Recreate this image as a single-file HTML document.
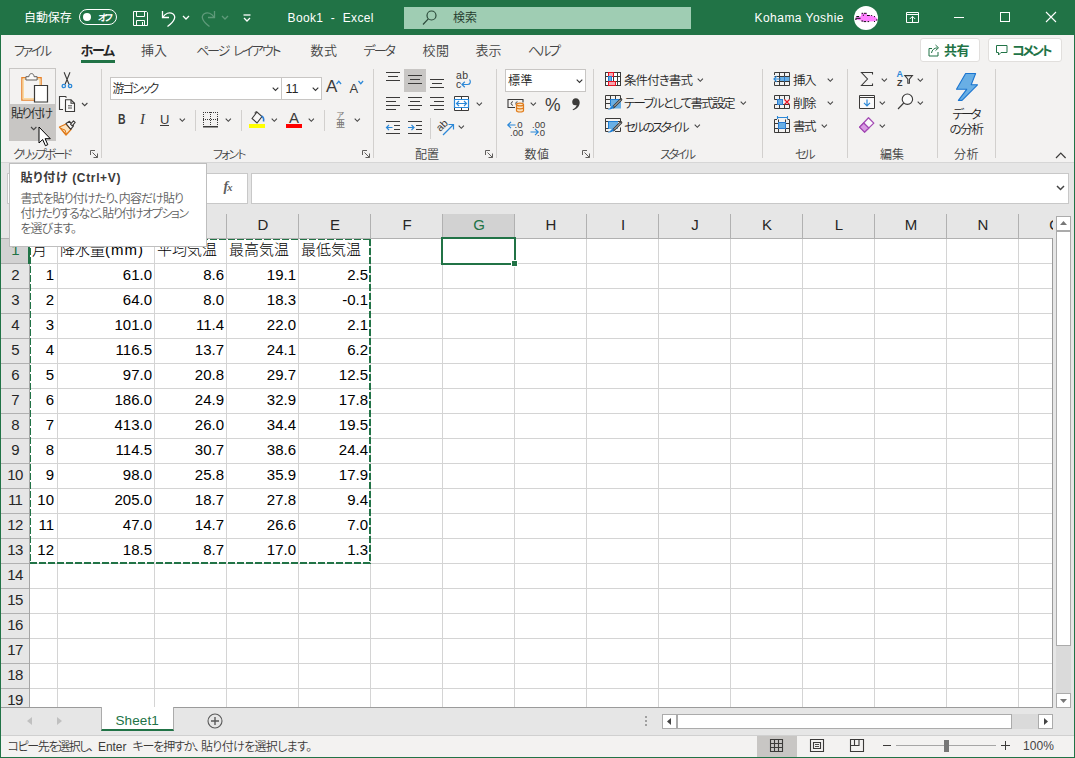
<!DOCTYPE html>
<html lang="ja"><head><meta charset="utf-8"><title>Book1 - Excel</title>
<style>
*{box-sizing:border-box;margin:0;padding:0}
html,body{width:1075px;height:758px;overflow:hidden;background:#e6e6e6}
body{font-family:"Liberation Sans","Noto Sans CJK JP",sans-serif;font-size:12px;color:#262626;position:relative}
.a{position:absolute}
.t{position:absolute;white-space:nowrap;line-height:1;font-feature-settings:"palt";font-weight:350}
svg{position:absolute;overflow:visible}
#title{left:0;top:0;width:1075px;height:35px;background:#217346}
#title .t{color:#fff}
#ribbon{left:1px;top:35px;width:1073px;height:127px;background:#f3f2f1}
.tab{font-size:13px;color:#444;top:44px;letter-spacing:-0.6px}
.gl{font-size:12px;color:#444;top:147px;letter-spacing:-0.8px}
.sep{position:absolute;top:69px;width:1px;height:89px;background:#d2d0ce}
.rt{font-size:12.5px;color:#262626;letter-spacing:-0.7px}
.ch{position:absolute;top:213px;height:23px;font-size:15px;color:#262626;text-align:center;line-height:23px}
.rh{position:absolute;left:1px;width:28px;height:24px;font-size:15px;letter-spacing:-0.7px;color:#262626;text-align:center;line-height:22px}
.c{position:absolute;height:24px;font-size:15px;line-height:22px;color:#000;font-weight:300;white-space:nowrap;overflow:hidden}
.r{text-align:right;padding-right:3px}
.l{text-align:left;padding-left:2px}
</style></head><body>

<div id="title" class="a"></div>
<div id="ribbon" class="a"></div>
<div class="a" style="left:1px;top:162px;width:1073px;height:1px;background:#d6d6d6"></div>
<div class="a" style="left:0;top:0;width:1px;height:758px;background:#217346"></div>
<div class="a" style="left:1074px;top:0;width:1px;height:758px;background:#217346"></div>
<div class="a" style="left:0;top:757px;width:1075px;height:1px;background:#217346"></div>
<div class="t" style="left:24px;top:12px;font-size:12px;color:#fff;letter-spacing:-0.1px;font-weight:400">自動保存</div>
<div class="a" style="left:79px;top:9px;width:38px;height:16px;border:1px solid #fff;border-radius:8px"></div>
<div class="a" style="left:83px;top:13px;width:8px;height:8px;border-radius:4px;background:#fff"></div>
<div class="t" style="left:98px;top:13px;font-size:9.500px;color:#fff;letter-spacing:-2.6px;font-weight:700;transform:skewX(-6deg)">オフ</div>
<svg style="left:132px;top:10px" width="17" height="17" viewBox="0 0 17 17" fill="none" stroke="#fff" stroke-width="1"><path d="M1.5 1.5h13l1 1v13h-14z"/><path d="M4.5 1.5v5h8v-5"/><path d="M4.500 15.500v-5h8v5"/><path d="M10.500 12v3.500"/></svg>
<svg style="left:160px;top:9px" width="18" height="18" viewBox="0 0 18 18" fill="none" stroke="#fff" stroke-width="1.300"><path d="M2.500 2v6.500h6.500"/><path d="M2.800 8.300C5 4.500 9.500 2.500 12.800 4.800c3.600 2.600 2.200 7-5.300 12.700"/></svg>
<svg style="left:182px;top:15px" width="8" height="6" viewBox="0 0 8 6" fill="none" stroke="#fff" stroke-width="1.300"><path d="M1 1l3 3 3-3"/></svg>
<svg style="left:199px;top:9px" width="18" height="18" viewBox="0 0 18 18" fill="none" stroke="#5f9a7a" stroke-width="1.300"><path d="M15.500 2v6.500h-6.500"/><path d="M15.200 8.300C13 4.500 8.500 2.500 5.200 4.800c-3.600 2.600-2.200 7 5.300 12.700"/></svg>
<svg style="left:221px;top:15px" width="8" height="6" viewBox="0 0 8 6" fill="none" stroke="#5f9a7a" stroke-width="1.300"><path d="M1 1l3 3 3-3"/></svg>
<svg style="left:243px;top:14px" width="8" height="8" viewBox="0 0 8 8" fill="none" stroke="#fff" stroke-width="1.300"><path d="M0.500 1h7"/><path d="M1 4l3 3 3-3"/></svg>
<div class="t" style="left:287.500px;top:11.500px;font-size:12px;letter-spacing:0.38px;color:#fff;font-weight:400">Book1&nbsp; -&nbsp; Excel</div>
<div class="a" style="left:404px;top:7px;width:287px;height:22px;background:#9fcdb3"></div>
<svg style="left:421px;top:9px" width="18" height="18" viewBox="0 0 18 18" fill="none" stroke="#2b4a3a" stroke-width="1.200"><circle cx="10.500" cy="6.500" r="4.500"/><path d="M7.300 9.800L2 15.500"/></svg>
<div class="t" style="left:453px;top:12px;font-size:12px;color:#1f3a2c">検索</div>
<div class="t" style="left:754.500px;top:12.400px;font-size:12px;letter-spacing:0.47px;color:#fff;font-weight:400">Kohama Yoshie</div>
<div class="a" style="left:854px;top:6px;width:24px;height:24px;border-radius:12px;background:#fff"></div>
<svg style="left:854px;top:6px" width="24" height="24" viewBox="0 0 24 24" fill="none"><path d="M2.300 10.300h4.700l0.400-3h5.500l0.400 1.700 4.600 0.400 3.400 1.300 2.500 2.500-2.500 2.100-12.700 0.500-1.600-1.300-5.500-0.900z" fill="#ff80ff"/><path d="M7.600 7.300h1.500M10 7.300h2.600M8.800 9.200h1.200M13 9.500h2.800M17.200 9.500h0.900M20 10.600h1M2.400 10.500h2.600M1.400 12.300h5.200M1.300 13.500h1.200M7.400 15h1.800M9.800 15.600h2.300M13.600 15.600h1.500M20 15.500h1M22 14h1.500" stroke="#111" stroke-width="1"/></svg>
<svg style="left:906px;top:12px" width="14" height="11" viewBox="0 0 14 11" fill="none" stroke="#fff" stroke-width="1"><path d="M0.500 0.500h12v10h-12z"/><path d="M0.500 2.500h12"/><path d="M6.500 10v-5.500M3.800 7l2.700-2.700 2.700 2.700"/></svg>
<div class="a" style="left:954px;top:17px;width:10px;height:1px;background:#fff"></div>
<div class="a" style="left:1000px;top:12px;width:10px;height:10px;border:1px solid #fff"></div>
<svg style="left:1046px;top:12px" width="10" height="10" viewBox="0 0 10 10" fill="none" stroke="#fff" stroke-width="1.100"><path d="M0 0l10 10M10 0l-10 10"/></svg>

<div class="t" style="left:14px;top:43.5px;font-size:13px;letter-spacing:-2.34px;color:#444">ファイル</div>
<div class="t" style="left:80.500px;top:43.5px;font-size:13px;letter-spacing:-1.30px;color:#262626;font-weight:bold">ホーム</div>
<div class="a" style="left:81px;top:60px;width:34px;height:3px;background:#217346"></div>
<div class="t" style="left:141px;top:43.5px;font-size:13px;letter-spacing:-0.02px;color:#444">挿入</div>
<div class="t" style="left:196px;top:43.5px;font-size:13px;letter-spacing:-2.04px;color:#444;word-spacing:3px">ページ レイアウト</div>
<div class="t" style="left:310.500px;top:43.5px;font-size:13px;letter-spacing:0.48px;color:#444">数式</div>
<div class="t" style="left:363.500px;top:43.5px;font-size:13px;letter-spacing:-1.92px;color:#444">データ</div>
<div class="t" style="left:422.500px;top:43.5px;font-size:13px;letter-spacing:0.48px;color:#444">校閲</div>
<div class="t" style="left:475.500px;top:43.5px;font-size:13px;letter-spacing:-0.02px;color:#444">表示</div>
<div class="t" style="left:528px;top:43.5px;font-size:13px;letter-spacing:-2.16px;color:#444">ヘルプ</div>
<div class="a" style="left:920px;top:38px;width:60px;height:24px;background:#fff;border:1px solid #e1dfdd;border-radius:3px"></div>
<svg style="left:927.500px;top:44px" width="13" height="13" viewBox="0 0 13 13" fill="none" stroke="#217346" stroke-width="1"><path d="M4 4.500h-3v7.500h9v-4"/><path d="M3.500 9c0.500-3 2.500-5 6-5.200"/><path d="M7.500 1l3 2.800-3 2.800"/></svg>
<div class="t" style="left:944px;top:44.200px;font-size:13px;letter-spacing:-0.52px;color:#217346;font-weight:bold">共有</div>
<div class="a" style="left:988px;top:38px;width:74px;height:24px;background:#fff;border:1px solid #e1dfdd;border-radius:3px"></div>
<svg style="left:996px;top:45px" width="12" height="12" viewBox="0 0 12 12" fill="none" stroke="#217346" stroke-width="1"><path d="M0.500 0.500h10.500v7h-6l-2.500 2.500v-2.500h-2z"/></svg>
<div class="t" style="left:1012px;top:44.200px;font-size:13px;letter-spacing:-2.20px;color:#217346;font-weight:bold">コメント</div>

<!-- clipboard group -->
<div class="a" style="left:9px;top:68px;width:47px;height:73px;border:1px solid #c8c6c4;background:#f3f2f1"></div>
<div class="a" style="left:9px;top:104px;width:47px;height:37px;background:#c8c6c4"></div>
<svg style="left:20px;top:72px" width="30" height="32" viewBox="0 0 30 32" fill="none">
<path d="M1.900 5.700h19.200v22.400h-19.200z" fill="#f5f4f3" stroke="#e8822b" stroke-width="1.400"/>
<path d="M3.300 7.100h16.400v19.600h-16.400z" stroke="#fbd9a0" stroke-width="1.400"/>
<path d="M5.900 8v-3.300h3c0.200-2 1.200-3.100 2.600-3.100s2.400 1.100 2.600 3.100h3v3.300z" fill="#fafafa" stroke="#605e5c" stroke-width="1"/>
<path d="M14.500 13.500h13v16.500h-13z" fill="#fff" stroke="#3b3a39" stroke-width="1.200"/>
</svg>
<div class="t" style="left:11px;top:108px;font-size:12.500px;letter-spacing:-1.87px;color:#262626">貼り付け</div>
<svg style="left:30px;top:126px" width="8" height="5" viewBox="0 0 8 5" fill="none" stroke="#444" stroke-width="1.100"><path d="M1 1l2.700 2.700 2.700-2.700"/></svg>
<!-- scissors -->
<svg style="left:61px;top:71px" width="12" height="18" viewBox="0 0 12 18" fill="none"><path d="M3.100 1.300l4.900 12M9 1.300l-4.900 12" stroke="#3b3a39" stroke-width="1.100"/><circle cx="2.800" cy="15" r="1.700" stroke="#2b88d8" stroke-width="1.300"/><circle cx="9.100" cy="15" r="1.700" stroke="#2b88d8" stroke-width="1.300"/></svg>
<!-- copy -->
<svg style="left:59px;top:96px" width="17" height="17" viewBox="0 0 17 17" fill="none" stroke="#3b3a39" stroke-width="1.100"><path d="M4 13.500h-3.500v-13h6l1 1" fill="#fafafa"/><path d="M6.500 3.800h5.500l3.500 3.500v8.200h-9z" fill="#fafafa"/><path d="M12 3.800v3.500h3.500"/><path d="M9 9.800h4M9 12h4" stroke-width="0.900"/></svg>
<svg style="left:81px;top:102px" width="8" height="5" viewBox="0 0 8 5" fill="none" stroke="#444" stroke-width="1.100"><path d="M1 1l2.700 2.700 2.700-2.700"/></svg>
<!-- format painter -->
<svg style="left:59px;top:120px" width="17" height="16" viewBox="0 0 17 16" fill="none"><path d="M0.500 7l6.500-3 5 5.500-5 5.500z" fill="#fbe3c0" stroke="#e07b1a" stroke-width="1.300" stroke-linejoin="round"/><path d="M4 11.500l3.500 3M2 8.500l4 1.500 1.500 4.500" stroke="#e07b1a" stroke-width="1"/><path d="M7 3.500l3.500-2.200 4 4.500-2.800 3.500z" fill="#fafafa" stroke="#3b3a39" stroke-width="1.100" stroke-linejoin="round"/><path d="M11.500 4.200l3-3.400 1.700 1.600-3 3.400z" fill="#fafafa" stroke="#3b3a39" stroke-width="1.100" stroke-linejoin="round"/></svg>
<div class="t" style="left:13px;top:148.600px;font-size:12px;letter-spacing:-2.42px;color:#444">クリップボード</div>
<svg style="left:90px;top:150px" width="8" height="8" viewBox="0 0 8 8" fill="none" stroke="#605e5c" stroke-width="1"><path d="M0.500 5v-4.500h4.500"/><path d="M2.500 2.500l5 5M7.500 3.500v4h-4"/></svg>
<div class="sep" style="left:101px"></div>
<!-- cursor placeholder is at the end of file -->
<!-- font group -->
<div class="a" style="left:110px;top:77px;width:172px;height:23px;background:#fff;border:1px solid #c8c6c4"></div>
<div class="a" style="left:282px;top:77px;width:40px;height:23px;background:#fff;border:1px solid #c8c6c4;border-left:none"></div>
<div class="a" style="left:281px;top:77px;width:1px;height:23px;background:#c8c6c4"></div>
<div class="t" style="left:112.500px;top:82.500px;font-size:12px;letter-spacing:-1.89px;color:#262626">游ゴシック</div>
<svg style="left:272px;top:87px" width="8" height="5" viewBox="0 0 8 5" fill="none" stroke="#333" stroke-width="1.100"><path d="M0.700 0.700l2.800 2.800 2.800-2.800"/></svg>
<div class="t" style="left:285.500px;top:83px;font-size:12.500px;letter-spacing:0.02px;color:#262626">11</div>
<svg style="left:312px;top:87px" width="8" height="5" viewBox="0 0 8 5" fill="none" stroke="#333" stroke-width="1.100"><path d="M0.700 0.700l2.800 2.800 2.800-2.800"/></svg>
<div class="t" style="left:326px;top:78px;font-size:17px;color:#3b3a39">A</div>
<svg style="left:336px;top:80px" width="6" height="5" viewBox="0 0 6 5" fill="none" stroke="#2b88d8" stroke-width="1.200"><path d="M0.500 4l2.300-2.700 2.300 2.700"/></svg>
<div class="t" style="left:349.500px;top:82px;font-size:13px;color:#3b3a39">A</div>
<svg style="left:358px;top:80px" width="6" height="5" viewBox="0 0 6 5" fill="none" stroke="#2b88d8" stroke-width="1.200"><path d="M0.500 1l2.300 2.700 2.300-2.700"/></svg>
<div class="t" style="left:117.500px;top:112.300px;font-size:14.200px;font-weight:bold;color:#3b3a39;transform:scaleX(0.740);transform-origin:0 0">B</div>
<div class="t" style="left:140px;top:112.300px;font-size:14.800px;font-style:italic;font-weight:400;color:#3b3a39;font-family:'Liberation Serif',serif">I</div>
<div class="t" style="left:160px;top:112.500px;font-size:13px;color:#3b3a39">U</div>
<div class="a" style="left:160px;top:125px;width:9px;height:1px;background:#3b3a39"></div>
<svg style="left:179px;top:118px" width="8" height="5" viewBox="0 0 8 5" fill="none" stroke="#444" stroke-width="1.100"><path d="M0.700 0.700l2.600 2.600 2.600-2.600"/></svg>
<div class="a" style="left:195px;top:110px;width:1px;height:21px;background:#d2d0ce"></div>
<svg style="left:203px;top:112px" width="16" height="16" viewBox="0 0 16 16" fill="none" stroke="#3b3a39" stroke-width="1"><path d="M0 0.500h15M0 7.500h15" stroke-dasharray="1 1"/><path d="M0.500 0v14M7.500 0v14M14.500 0v14" stroke-dasharray="1 1"/><path d="M0 14.750h15" stroke-width="1.500"/></svg>
<svg style="left:225px;top:118px" width="8" height="5" viewBox="0 0 8 5" fill="none" stroke="#444" stroke-width="1.100"><path d="M0.700 0.700l2.600 2.600 2.600-2.600"/></svg>
<div class="a" style="left:241px;top:110px;width:1px;height:21px;background:#d2d0ce"></div>
<svg style="left:249px;top:111px" width="17" height="18" viewBox="0 0 17 18" fill="none"><path d="M3 7.500l5-6.500 5 4.500-5 6.500z" stroke="#3b3a39" stroke-width="1.100" fill="#f7f6f5"/><path d="M8 1c-1.500-1-2.500 0.500-1.500 2" stroke="#3b3a39" stroke-width="1"/><path d="M12.500 5c2 1 2.500 3 2 5.500" stroke="#2b7cd3" stroke-width="1.600"/><rect x="0" y="13" width="16" height="4" fill="#ffff00"/></svg>
<svg style="left:271px;top:118px" width="8" height="5" viewBox="0 0 8 5" fill="none" stroke="#444" stroke-width="1.100"><path d="M0.700 0.700l2.600 2.600 2.600-2.600"/></svg>
<div class="t" style="left:289px;top:109.500px;font-size:15px;color:#3b3a39">A</div>
<div class="a" style="left:286px;top:124px;width:16px;height:4px;background:#ff0000"></div>
<svg style="left:308px;top:118px" width="8" height="5" viewBox="0 0 8 5" fill="none" stroke="#444" stroke-width="1.100"><path d="M0.700 0.700l2.600 2.600 2.600-2.600"/></svg>
<div class="a" style="left:324px;top:110px;width:1px;height:21px;background:#d2d0ce"></div>
<div class="t" style="left:336.500px;top:111.500px;font-size:8px;color:#797775;font-weight:400">ア</div>
<div class="t" style="left:336px;top:119.500px;font-size:9px;color:#797775;font-weight:500">亜</div>
<svg style="left:354px;top:118px" width="8" height="5" viewBox="0 0 8 5" fill="none" stroke="#444" stroke-width="1.100"><path d="M0.700 0.700l2.600 2.600 2.600-2.600"/></svg>
<div class="t" style="left:213px;top:148.600px;font-size:12px;letter-spacing:-1.93px;color:#444">フォント</div>
<svg style="left:362px;top:150px" width="8" height="8" viewBox="0 0 8 8" fill="none" stroke="#605e5c" stroke-width="1"><path d="M0.500 5v-4.500h4.500"/><path d="M2.500 2.500l5 5M7.500 3.500v4h-4"/></svg>
<div class="sep" style="left:373px"></div>
<!-- alignment group -->
<svg style="left:385px;top:70px" width="16" height="14" viewBox="0 0 16 14" stroke="#3b3a39" stroke-width="1.100" fill="none"><path d="M1 2.500h14M3 6.500h10M1 10.500h14"/></svg>
<div class="a" style="left:404px;top:69px;width:22px;height:23px;background:#c8c6c4"></div>
<svg style="left:407px;top:73px" width="16" height="14" viewBox="0 0 16 14" stroke="#3b3a39" stroke-width="1.100" fill="none"><path d="M1 2.500h14M3 6.500h10M1 10.500h14"/></svg>
<svg style="left:429px;top:77px" width="16" height="14" viewBox="0 0 16 14" stroke="#3b3a39" stroke-width="1.100" fill="none"><path d="M1 2.500h14M3 6.500h10M1 10.500h14"/></svg>
<div class="t" style="left:456px;top:70px;font-size:10.500px;color:#3b3a39;letter-spacing:0.3px">ab</div>
<div class="t" style="left:456px;top:78.500px;font-size:10.500px;color:#3b3a39">c</div>
<svg style="left:461px;top:79px" width="10" height="10" viewBox="0 0 10 10" fill="none" stroke="#2b88d8" stroke-width="1.200"><path d="M8.500 0.500c1.500 2 1 5-2 5h-5.500"/><path d="M3.800 2.800l-2.800 2.700 2.800 2.700"/></svg>
<svg style="left:385px;top:95px" width="16" height="17" viewBox="0 0 16 17" stroke="#3b3a39" stroke-width="1.100" fill="none"><path d="M1 2.500h14M1 6.500h10M1 10.500h14M1 14.500h10"/></svg>
<svg style="left:407px;top:95px" width="16" height="17" viewBox="0 0 16 17" stroke="#3b3a39" stroke-width="1.100" fill="none"><path d="M1 2.500h14M3 6.500h10M1 10.500h14M3 14.500h10"/></svg>
<svg style="left:429px;top:95px" width="16" height="17" viewBox="0 0 16 17" stroke="#3b3a39" stroke-width="1.100" fill="none"><path d="M1 2.500h14M5 6.500h10M1 10.500h14M5 14.500h10"/></svg>
<svg style="left:454px;top:96px" width="16" height="16" viewBox="0 0 16 16" fill="none"><path d="M0.500 0.500h14v14h-14z" stroke="#3b3a39" stroke-width="1" fill="#fff"/><path d="M7.500 0.500v3M7.500 11.500v3" stroke="#3b3a39" stroke-width="1"/><path d="M0.500 3.500h14v8h-14z" stroke="#2b88d8" stroke-width="1.200" fill="#fff"/><path d="M2.500 7.500h10M5 5l-2.500 2.500 2.500 2.500M10 5l2.500 2.500-2.500 2.500" stroke="#2b88d8" stroke-width="1.200"/></svg>
<svg style="left:476px;top:102px" width="8" height="5" viewBox="0 0 8 5" fill="none" stroke="#444" stroke-width="1.100"><path d="M0.700 0.700l2.600 2.600 2.600-2.600"/></svg>
<svg style="left:385px;top:119px" width="16" height="17" viewBox="0 0 16 17" fill="none"><path d="M1 2.500h14M9 6.500h6M9 10.500h6M1 14.500h14" stroke="#3b3a39" stroke-width="1.100"/><path d="M1.500 8.500h6M4 6l-2.500 2.500 2.500 2.500" stroke="#2b88d8" stroke-width="1.200"/></svg>
<svg style="left:407px;top:119px" width="16" height="17" viewBox="0 0 16 17" fill="none"><path d="M1 2.500h14M9 6.500h6M9 10.500h6M1 14.500h14" stroke="#3b3a39" stroke-width="1.100"/><path d="M1 8.500h6M4.500 6l2.500 2.500-2.500 2.500" stroke="#2b88d8" stroke-width="1.200"/></svg>
<div class="a" style="left:430px;top:118px;width:1px;height:21px;background:#d2d0ce"></div>
<div class="t" style="left:436px;top:120px;font-size:10.500px;color:#3b3a39;transform:rotate(-45deg);transform-origin:50% 50%">ab</div>
<svg style="left:442px;top:123px" width="13" height="13" viewBox="0 0 13 13" fill="none" stroke="#2b88d8" stroke-width="1.200"><path d="M1 12l10.500-10.500"/><path d="M6.500 1.500h5v5"/></svg>
<svg style="left:458px;top:125px" width="8" height="5" viewBox="0 0 8 5" fill="none" stroke="#444" stroke-width="1.100"><path d="M0.700 0.700l2.600 2.600 2.600-2.600"/></svg>
<div class="t" style="left:415px;top:148.600px;font-size:12px;letter-spacing:-0.02px;color:#444">配置</div>
<svg style="left:485px;top:150px" width="8" height="8" viewBox="0 0 8 8" fill="none" stroke="#605e5c" stroke-width="1"><path d="M0.500 5v-4.500h4.500"/><path d="M2.500 2.500l5 5M7.500 3.500v4h-4"/></svg>
<div class="sep" style="left:496px"></div>
<!-- number group -->
<div class="a" style="left:505px;top:69px;width:81px;height:23px;background:#fff;border:1px solid #c8c6c4"></div>
<div class="t" style="left:508px;top:74.500px;font-size:12px;letter-spacing:0.48px;color:#262626">標準</div>
<svg style="left:576px;top:79px" width="8" height="5" viewBox="0 0 8 5" fill="none" stroke="#333" stroke-width="1.100"><path d="M0.700 0.700l2.800 2.800 2.800-2.800"/></svg>
<svg style="left:507px;top:98px" width="18" height="15" viewBox="0 0 18 15" fill="none"><path d="M8 9.500h-7v-8h15v3" stroke="#3b3a39" stroke-width="1.100"/><path d="M6 3.800c-2.500-0.300-2.500 3.700 0 3.400M10.500 3.800c-2-0.300-2 3 -0.500 3.400" stroke="#3b3a39" stroke-width="1"/><path d="M9.500 6.500v6c0 2 7 2 7 0v-6" fill="#fbe3c0" stroke="#e07b1a" stroke-width="1.200"/><ellipse cx="13" cy="6.500" rx="3.500" ry="1.400" fill="#fbe3c0" stroke="#e07b1a" stroke-width="1.200"/><path d="M9.500 9.500c0 1.800 7 1.800 7 0" stroke="#e07b1a" stroke-width="1.100"/></svg>
<svg style="left:530px;top:102px" width="8" height="5" viewBox="0 0 8 5" fill="none" stroke="#444" stroke-width="1.100"><path d="M0.700 0.700l2.600 2.600 2.600-2.600"/></svg>
<div class="t" style="left:544.500px;top:94.500px;font-size:19px;color:#3b3a39;transform:scaleX(0.920);transform-origin:0 0">%</div>
<svg style="left:571px;top:98px" width="10" height="13" viewBox="0 0 10 13" fill="#3b3a39"><path d="M4.800 0.300c2.300 0 3.900 1.700 3.900 4.200 0 3.500-2.600 6.500-6.700 7.800l-0.400-0.900c2.400-1.100 3.800-2.600 4-4.400-0.500 0.200-0.900 0.300-1.400 0.300-1.800 0-3-1.300-3-3.300 0-2.100 1.500-3.700 3.600-3.700z"/></svg>
<svg style="left:507px;top:121px" width="9" height="8" viewBox="0 0 9 8" fill="none" stroke="#2b88d8" stroke-width="1.200"><path d="M0.800 4h7.700M4 0.800l-3.200 3.200 3.200 3.200"/></svg>
<div class="t" style="left:514.500px;top:120px;font-size:9.500px;color:#3b3a39">.0</div>
<div class="t" style="left:510px;top:127.500px;font-size:9.500px;color:#3b3a39">.00</div>
<div class="t" style="left:532px;top:120px;font-size:9.500px;color:#3b3a39">.00</div>
<svg style="left:529.500px;top:128px" width="9" height="8" viewBox="0 0 9 8" fill="none" stroke="#2b88d8" stroke-width="1.200"><path d="M0.500 4h7.700M5 0.800l3.200 3.200-3.200 3.200"/></svg>
<div class="t" style="left:537px;top:127.500px;font-size:9.500px;color:#3b3a39">.0</div>
<div class="t" style="left:524.500px;top:148.600px;font-size:12px;letter-spacing:0.48px;color:#444">数値</div>
<svg style="left:582px;top:150px" width="8" height="8" viewBox="0 0 8 8" fill="none" stroke="#605e5c" stroke-width="1"><path d="M0.500 5v-4.500h4.500"/><path d="M2.500 2.500l5 5M7.500 3.500v4h-4"/></svg>
<div class="sep" style="left:593px"></div>
<!-- styles group -->
<svg style="left:605px;top:72px" width="16" height="14" viewBox="0 0 16 14" fill="none"><rect x="0.500" y="0.500" width="15" height="13" fill="#fff" stroke="#3b3a39"/><path d="M0.500 4.500h15M0.500 9.500h15M8.500 0.500v13M12.500 0.500v13" stroke="#3b3a39" stroke-width="1"/><rect x="3.500" y="0.500" width="5" height="4" fill="#f8a5ae" stroke="#e81123"/><rect x="3.500" y="4.500" width="3" height="5" fill="#69afe5" stroke="#1e7fd6"/><rect x="3.500" y="9.500" width="7" height="4" fill="#f8a5ae" stroke="#e81123"/></svg>
<div class="t" style="left:624px;top:75px;font-size:12.500px;letter-spacing:-0.89px;color:#262626">条件付き書式</div>
<svg style="left:697px;top:78px" width="8" height="5" viewBox="0 0 8 5" fill="none" stroke="#444" stroke-width="1.100"><path d="M0.700 0.700l2.600 2.600 2.600-2.600"/></svg>
<svg style="left:605px;top:95px" width="17" height="15" viewBox="0 0 17 15" fill="none"><path d="M0.500 13.500v-13h15v4.500" stroke="#3b3a39"/><path d="M0.500 4.500h15M0.500 8.500h5M5.500 0.500v8M10.500 0.500v4M0.500 13.500h3" stroke="#3b3a39"/><rect x="5.500" y="4.500" width="10.500" height="9" fill="#69afe5"/><path d="M5.500 11v-6.500h10.500" stroke="#1e7fd6"/><path d="M16 4.500l-7.500 7.500" stroke="#3b3a39" stroke-width="2.600" stroke-linecap="round"/><path d="M15.800 4.700l-6.800 6.800" stroke="#e8e8e8" stroke-width="0.900"/><path d="M2.500 14.200c2.500 0.600 5.500-0.200 6.500-2.200l-1.800-1.600c-1 2-2.500 3-4.700 3.800z" fill="#1e7fd6"/></svg>
<div class="t" style="left:624px;top:98px;font-size:12.500px;letter-spacing:-1.68px;color:#262626">テーブルとして書式設定</div>
<svg style="left:740px;top:101px" width="8" height="5" viewBox="0 0 8 5" fill="none" stroke="#444" stroke-width="1.100"><path d="M0.700 0.700l2.600 2.600 2.600-2.600"/></svg>
<svg style="left:605px;top:118px" width="17" height="15" viewBox="0 0 17 15" fill="none"><path d="M0.500 13.500v-13h15v4.500M10 13.500h5.500v-4" stroke="#3b3a39"/><path d="M0.500 3.500h15M0.500 10.500h3M0.500 13.500h3" stroke="#3b3a39"/><rect x="3.500" y="3.500" width="9.500" height="7.500" fill="#69afe5"/><path d="M3.500 11v-7.500h9.500" stroke="#1e7fd6"/><path d="M16 4.500l-7.500 7.500" stroke="#3b3a39" stroke-width="2.600" stroke-linecap="round"/><path d="M15.800 4.700l-6.800 6.800" stroke="#e8e8e8" stroke-width="0.900"/><path d="M2.500 14.200c2.500 0.600 5.500-0.200 6.500-2.200l-1.800-1.600c-1 2-2.500 3-4.700 3.800z" fill="#1e7fd6"/></svg>
<div class="t" style="left:624px;top:121.500px;font-size:12.500px;letter-spacing:-2.51px;color:#262626">セルのスタイル</div>
<svg style="left:694px;top:124px" width="8" height="5" viewBox="0 0 8 5" fill="none" stroke="#444" stroke-width="1.100"><path d="M0.700 0.700l2.600 2.600 2.600-2.600"/></svg>
<div class="t" style="left:660px;top:148.600px;font-size:12px;letter-spacing:-2.36px;color:#444">スタイル</div>
<div class="sep" style="left:762px"></div>
<!-- cells group -->
<svg style="left:773px;top:72px" width="18" height="14" viewBox="0 0 18 14" fill="none"><path d="M1.500 3v-2.500h15v13h-15v-3.500" stroke="#3b3a39"/><path d="M1.500 4.500h15M1.500 9.500h15M6.500 0.500v13M11.500 0.500v13" stroke="#3b3a39"/><rect x="7" y="5" width="9.500" height="4" fill="#69afe5"/><path d="M11.500 4.500v5" stroke="#2b7cd3"/><path d="M1 7h7M3.800 4.200l-2.800 2.800 2.800 2.800" stroke="#2b88d8" stroke-width="1.200"/></svg>
<div class="t" style="left:793px;top:75px;font-size:12.500px;letter-spacing:-1.52px;color:#262626">挿入</div>
<svg style="left:827px;top:78px" width="8" height="5" viewBox="0 0 8 5" fill="none" stroke="#444" stroke-width="1.100"><path d="M0.700 0.700l2.600 2.600 2.600-2.600"/></svg>
<svg style="left:773px;top:95px" width="18" height="14" viewBox="0 0 18 14" fill="none"><path d="M1.500 4.500v-4h15v4M1.500 9.500v4h15v-4" stroke="#3b3a39"/><path d="M1.500 4.500h2.500M1.500 9.500h15M6.500 0.500v4M11.500 0.500v4M6.500 9.500v4M11.500 9.500v4" stroke="#3b3a39"/><rect x="4.500" y="4.500" width="5" height="5" fill="#69afe5" stroke="#2b7cd3"/><path d="M11.500 4.500l5 5M16.500 4.500l-5 5" stroke="#e81123" stroke-width="1.200"/></svg>
<div class="t" style="left:793px;top:98px;font-size:12.500px;letter-spacing:-1.52px;color:#262626">削除</div>
<svg style="left:827px;top:101px" width="8" height="5" viewBox="0 0 8 5" fill="none" stroke="#444" stroke-width="1.100"><path d="M0.700 0.700l2.600 2.600 2.600-2.600"/></svg>
<svg style="left:773px;top:116px" width="18" height="17" viewBox="0 0 18 17" fill="none"><path d="M4.500 1.500h10M4.500 0v3M14.500 0v3" stroke="#2b88d8" stroke-width="1.100"/><path d="M4 3.500h-2.500v13h15v-13h-2" stroke="#3b3a39"/><path d="M1.500 7.500h15M1.500 12.500h15M5.500 3.500v13M12.500 3.500v13" stroke="#3b3a39"/><rect x="5.500" y="6.500" width="7" height="6" fill="#69afe5" stroke="#2b7cd3"/></svg>
<div class="t" style="left:793px;top:121px;font-size:12.500px;letter-spacing:-1.52px;color:#262626">書式</div>
<svg style="left:821px;top:124px" width="8" height="5" viewBox="0 0 8 5" fill="none" stroke="#444" stroke-width="1.100"><path d="M0.700 0.700l2.600 2.600 2.600-2.600"/></svg>
<div class="t" style="left:795px;top:148.600px;font-size:12px;letter-spacing:-2.16px;color:#444">セル</div>
<div class="sep" style="left:847px"></div>
<!-- editing group -->
<svg style="left:860px;top:72px" width="14" height="14" viewBox="0 0 14 14" fill="none" stroke="#3b3a39" stroke-width="1.100"><path d="M12.500 2.500v-2h-11l6 6.500-6 6.500h11v-2"/></svg>
<svg style="left:881px;top:78px" width="8" height="5" viewBox="0 0 8 5" fill="none" stroke="#444" stroke-width="1.100"><path d="M0.700 0.700l2.600 2.600 2.600-2.600"/></svg>
<div class="t" style="left:896.500px;top:70px;font-size:9px;font-weight:bold;color:#2b88d8">A</div>
<div class="t" style="left:897px;top:79px;font-size:9px;font-weight:bold;color:#3b3a39">Z</div>
<svg style="left:904px;top:75px" width="10" height="9" viewBox="0 0 10 9" fill="none" stroke="#3b3a39" stroke-width="1.100"><path d="M0.800 0.600h7.600l-3 3.600v4h-1.600v-4z"/></svg>
<svg style="left:917px;top:78px" width="8" height="5" viewBox="0 0 8 5" fill="none" stroke="#444" stroke-width="1.100"><path d="M0.700 0.700l2.600 2.600 2.600-2.600"/></svg>
<svg style="left:859px;top:95px" width="17" height="14" viewBox="0 0 17 14" fill="none"><path d="M0.500 0.500h15v13h-15z" stroke="#3b3a39" fill="#fafafa"/><path d="M0.500 2.500h15" stroke="#3b3a39"/><path d="M8 4.500v6M5 7.800l3 3 3-3" stroke="#2b88d8" stroke-width="1.200"/></svg>
<svg style="left:879px;top:101px" width="8" height="5" viewBox="0 0 8 5" fill="none" stroke="#444" stroke-width="1.100"><path d="M0.700 0.700l2.600 2.600 2.600-2.600"/></svg>
<svg style="left:897px;top:93px" width="17" height="17" viewBox="0 0 17 17" fill="none" stroke="#3b3a39" stroke-width="1.100"><circle cx="10.400" cy="6.200" r="5.200" fill="#fafafa"/><path d="M6.700 10l-5.700 6"/></svg>
<svg style="left:917px;top:101px" width="8" height="5" viewBox="0 0 8 5" fill="none" stroke="#444" stroke-width="1.100"><path d="M0.700 0.700l2.600 2.600 2.600-2.600"/></svg>
<svg style="left:859px;top:117px" width="16" height="16" viewBox="0 0 16 16" fill="none"><path d="M9.500 0.800l5.300 5.300-9.200 9-5-5z" fill="#fafafa" stroke="#a349b4" stroke-width="1.300" stroke-linejoin="round"/><path d="M0.600 10.100l4.200-4.100 5 5-4.200 4.100z" fill="#d89be3" stroke="#a349b4" stroke-width="1.300" stroke-linejoin="round"/></svg>
<svg style="left:879px;top:124px" width="8" height="5" viewBox="0 0 8 5" fill="none" stroke="#444" stroke-width="1.100"><path d="M0.700 0.700l2.600 2.600 2.600-2.600"/></svg>
<div class="t" style="left:880px;top:148.600px;font-size:12px;letter-spacing:-0.02px;color:#444">編集</div>
<div class="sep" style="left:937px"></div>
<!-- analysis group -->
<svg style="left:955px;top:72px" width="24" height="30" viewBox="0 0 24 30" fill="none"><path d="M10.600 1.500h10l-4.400 11.300h6.300l-15.500 15.600h-3.600l8.300-11.100h-10.200z" fill="#69afe5" stroke="#1b75d0" stroke-width="1.100" stroke-linejoin="round"/></svg>
<div class="t" style="left:952.500px;top:108.500px;font-size:12.500px;letter-spacing:-2.98px;color:#262626">データ</div>
<div class="t" style="left:949.500px;top:123.500px;font-size:12.500px;letter-spacing:-1.28px;color:#262626">の分析</div>
<div class="t" style="left:954px;top:148.600px;font-size:12px;letter-spacing:0.48px;color:#444">分析</div>
<div class="sep" style="left:995px"></div>
<svg style="left:1055px;top:152px" width="12" height="7" viewBox="0 0 12 7" fill="none" stroke="#3b3a39" stroke-width="1.200"><path d="M1 6l4.800-4.800 4.800 4.800"/></svg>
<!-- mouse cursor -->
<svg style="left:38px;top:126px" width="14" height="21" viewBox="0 0 14 21" fill="none"><path d="M1 1v16l3.700-3.500 2.700 6.200 2.400-1-2.700-6h5.200z" fill="#fff" stroke="#000" stroke-width="1" stroke-linejoin="miter"/></svg>

<div class="a" style="left:7px;top:173px;width:130px;height:31px;background:#fff;border:1px solid #c8c8c8"></div>
<div class="a" style="left:160px;top:173px;width:88px;height:31px;background:#fff;border:1px solid #c8c8c8"></div>
<div class="t" style="left:223.500px;top:180px;font-size:14px;font-style:italic;font-weight:bold;color:#5e5e5e;font-family:'Liberation Serif',serif;letter-spacing:-1px">f<span style="font-size:10.500px">x</span></div>
<div class="a" style="left:251px;top:173px;width:818px;height:31px;background:#fff;border:1px solid #c8c8c8"></div>
<svg style="left:1056px;top:185px" width="9" height="6" viewBox="0 0 9 6" fill="none" stroke="#444" stroke-width="1.500"><path d="M1 1l3.500 3.500 3.500-3.500"/></svg>

<div id="grid" class="a" style="left:1px;top:213px;width:1052px;height:495px;overflow:hidden;background:#fff">
<div class="a" style="left:0;top:0;width:1053px;height:25px;background:#e6e6e6"></div>
<div class="a" style="left:0;top:25px;width:28px;height:470px;background:#e6e6e6"></div>
</div>
<div id="gridlines" class="a" style="left:0;top:0;width:1053px;height:708px;overflow:hidden">
<div class="a" style="left:443px;top:214px;width:72px;height:24px;background:#d2d2d2"></div>
<div class="a" style="left:443px;top:237px;width:72px;height:2px;background:#217346"></div>
<div class="a" style="left:1px;top:239px;width:28px;height:24px;background:#d2d2d2"></div>
<div class="a" style="left:29px;top:214px;width:1px;height:24px;background:#b1b1b1"></div>
<div class="ch" style="left:30px;width:27px;">A</div>
<div class="a" style="left:57px;top:239px;width:1px;height:470px;background:#d4d4d4"></div>
<div class="a" style="left:57px;top:214px;width:1px;height:24px;background:#b1b1b1"></div>
<div class="ch" style="left:58px;width:97px;">B</div>
<div class="a" style="left:154px;top:239px;width:1px;height:470px;background:#d4d4d4"></div>
<div class="a" style="left:154px;top:214px;width:1px;height:24px;background:#b1b1b1"></div>
<div class="ch" style="left:155px;width:72px;">C</div>
<div class="a" style="left:226px;top:239px;width:1px;height:470px;background:#d4d4d4"></div>
<div class="a" style="left:226px;top:214px;width:1px;height:24px;background:#b1b1b1"></div>
<div class="ch" style="left:227px;width:72px;">D</div>
<div class="a" style="left:298px;top:239px;width:1px;height:470px;background:#d4d4d4"></div>
<div class="a" style="left:298px;top:214px;width:1px;height:24px;background:#b1b1b1"></div>
<div class="ch" style="left:299px;width:72px;">E</div>
<div class="a" style="left:370px;top:239px;width:1px;height:470px;background:#d4d4d4"></div>
<div class="a" style="left:370px;top:214px;width:1px;height:24px;background:#b1b1b1"></div>
<div class="ch" style="left:371px;width:72px;">F</div>
<div class="a" style="left:442px;top:239px;width:1px;height:470px;background:#d4d4d4"></div>
<div class="a" style="left:442px;top:214px;width:1px;height:24px;background:#b1b1b1"></div>
<div class="ch" style="left:443px;width:72px;color:#217346;">G</div>
<div class="a" style="left:514px;top:239px;width:1px;height:470px;background:#d4d4d4"></div>
<div class="a" style="left:514px;top:214px;width:1px;height:24px;background:#b1b1b1"></div>
<div class="ch" style="left:515px;width:72px;">H</div>
<div class="a" style="left:586px;top:239px;width:1px;height:470px;background:#d4d4d4"></div>
<div class="a" style="left:586px;top:214px;width:1px;height:24px;background:#b1b1b1"></div>
<div class="ch" style="left:587px;width:72px;">I</div>
<div class="a" style="left:658px;top:239px;width:1px;height:470px;background:#d4d4d4"></div>
<div class="a" style="left:658px;top:214px;width:1px;height:24px;background:#b1b1b1"></div>
<div class="ch" style="left:659px;width:72px;">J</div>
<div class="a" style="left:730px;top:239px;width:1px;height:470px;background:#d4d4d4"></div>
<div class="a" style="left:730px;top:214px;width:1px;height:24px;background:#b1b1b1"></div>
<div class="ch" style="left:731px;width:72px;">K</div>
<div class="a" style="left:802px;top:239px;width:1px;height:470px;background:#d4d4d4"></div>
<div class="a" style="left:802px;top:214px;width:1px;height:24px;background:#b1b1b1"></div>
<div class="ch" style="left:803px;width:72px;">L</div>
<div class="a" style="left:874px;top:239px;width:1px;height:470px;background:#d4d4d4"></div>
<div class="a" style="left:874px;top:214px;width:1px;height:24px;background:#b1b1b1"></div>
<div class="ch" style="left:875px;width:72px;">M</div>
<div class="a" style="left:946px;top:239px;width:1px;height:470px;background:#d4d4d4"></div>
<div class="a" style="left:946px;top:214px;width:1px;height:24px;background:#b1b1b1"></div>
<div class="ch" style="left:947px;width:72px;">N</div>
<div class="a" style="left:1018px;top:239px;width:1px;height:470px;background:#d4d4d4"></div>
<div class="a" style="left:1018px;top:214px;width:1px;height:24px;background:#b1b1b1"></div>
<div class="ch" style="left:1019px;width:72px;">O</div>
<div class="a" style="left:1px;top:238px;width:1052px;height:1px;background:#b1b1b1"></div>
<div class="a" style="left:443px;top:237px;width:72px;height:2px;background:#217346"></div>
<div class="a" style="left:29px;top:239px;width:1px;height:470px;background:#a6a6a6"></div>
<div class="a" style="left:30px;top:263px;width:1023px;height:1px;background:#d4d4d4"></div>
<div class="a" style="left:1px;top:263px;width:28px;height:1px;background:#b1b1b1"></div>
<div class="rh" style="top:239px;color:#217346;">1</div>
<div class="a" style="left:30px;top:288px;width:1023px;height:1px;background:#d4d4d4"></div>
<div class="a" style="left:1px;top:288px;width:28px;height:1px;background:#b1b1b1"></div>
<div class="rh" style="top:264px;">2</div>
<div class="a" style="left:30px;top:313px;width:1023px;height:1px;background:#d4d4d4"></div>
<div class="a" style="left:1px;top:313px;width:28px;height:1px;background:#b1b1b1"></div>
<div class="rh" style="top:289px;">3</div>
<div class="a" style="left:30px;top:338px;width:1023px;height:1px;background:#d4d4d4"></div>
<div class="a" style="left:1px;top:338px;width:28px;height:1px;background:#b1b1b1"></div>
<div class="rh" style="top:314px;">4</div>
<div class="a" style="left:30px;top:363px;width:1023px;height:1px;background:#d4d4d4"></div>
<div class="a" style="left:1px;top:363px;width:28px;height:1px;background:#b1b1b1"></div>
<div class="rh" style="top:339px;">5</div>
<div class="a" style="left:30px;top:388px;width:1023px;height:1px;background:#d4d4d4"></div>
<div class="a" style="left:1px;top:388px;width:28px;height:1px;background:#b1b1b1"></div>
<div class="rh" style="top:364px;">6</div>
<div class="a" style="left:30px;top:413px;width:1023px;height:1px;background:#d4d4d4"></div>
<div class="a" style="left:1px;top:413px;width:28px;height:1px;background:#b1b1b1"></div>
<div class="rh" style="top:389px;">7</div>
<div class="a" style="left:30px;top:438px;width:1023px;height:1px;background:#d4d4d4"></div>
<div class="a" style="left:1px;top:438px;width:28px;height:1px;background:#b1b1b1"></div>
<div class="rh" style="top:414px;">8</div>
<div class="a" style="left:30px;top:463px;width:1023px;height:1px;background:#d4d4d4"></div>
<div class="a" style="left:1px;top:463px;width:28px;height:1px;background:#b1b1b1"></div>
<div class="rh" style="top:439px;">9</div>
<div class="a" style="left:30px;top:488px;width:1023px;height:1px;background:#d4d4d4"></div>
<div class="a" style="left:1px;top:488px;width:28px;height:1px;background:#b1b1b1"></div>
<div class="rh" style="top:464px;">10</div>
<div class="a" style="left:30px;top:513px;width:1023px;height:1px;background:#d4d4d4"></div>
<div class="a" style="left:1px;top:513px;width:28px;height:1px;background:#b1b1b1"></div>
<div class="rh" style="top:489px;">11</div>
<div class="a" style="left:30px;top:538px;width:1023px;height:1px;background:#d4d4d4"></div>
<div class="a" style="left:1px;top:538px;width:28px;height:1px;background:#b1b1b1"></div>
<div class="rh" style="top:514px;">12</div>
<div class="a" style="left:30px;top:563px;width:1023px;height:1px;background:#d4d4d4"></div>
<div class="a" style="left:1px;top:563px;width:28px;height:1px;background:#b1b1b1"></div>
<div class="rh" style="top:539px;">13</div>
<div class="a" style="left:30px;top:588px;width:1023px;height:1px;background:#d4d4d4"></div>
<div class="a" style="left:1px;top:588px;width:28px;height:1px;background:#b1b1b1"></div>
<div class="rh" style="top:564px;">14</div>
<div class="a" style="left:30px;top:613px;width:1023px;height:1px;background:#d4d4d4"></div>
<div class="a" style="left:1px;top:613px;width:28px;height:1px;background:#b1b1b1"></div>
<div class="rh" style="top:589px;">15</div>
<div class="a" style="left:30px;top:638px;width:1023px;height:1px;background:#d4d4d4"></div>
<div class="a" style="left:1px;top:638px;width:28px;height:1px;background:#b1b1b1"></div>
<div class="rh" style="top:614px;">16</div>
<div class="a" style="left:30px;top:663px;width:1023px;height:1px;background:#d4d4d4"></div>
<div class="a" style="left:1px;top:663px;width:28px;height:1px;background:#b1b1b1"></div>
<div class="rh" style="top:639px;">17</div>
<div class="a" style="left:30px;top:688px;width:1023px;height:1px;background:#d4d4d4"></div>
<div class="a" style="left:1px;top:688px;width:28px;height:1px;background:#b1b1b1"></div>
<div class="rh" style="top:664px;">18</div>
<div class="a" style="left:30px;top:713px;width:1023px;height:1px;background:#d4d4d4"></div>
<div class="a" style="left:1px;top:713px;width:28px;height:1px;background:#b1b1b1"></div>
<div class="rh" style="top:689px;">19</div>
<div class="a" style="left:28px;top:239px;width:2px;height:25px;background:#217346"></div>
<div class="c l" style="left:30px;top:239px;width:27px">月</div>
<div class="c l" style="left:58px;top:239px;width:97px">降水量<span style="letter-spacing:1px">(mm)</span></div>
<div class="c l" style="left:155px;top:239px;width:72px">平均気温</div>
<div class="c l" style="left:227px;top:239px;width:72px">最高気温</div>
<div class="c l" style="left:299px;top:239px;width:72px">最低気温</div>
<div class="c r" style="left:30px;top:264px;width:27px">1</div>
<div class="c r" style="left:58px;top:264px;width:97px">61.0</div>
<div class="c r" style="left:155px;top:264px;width:72px">8.6</div>
<div class="c r" style="left:227px;top:264px;width:72px">19.1</div>
<div class="c r" style="left:299px;top:264px;width:72px">2.5</div>
<div class="c r" style="left:30px;top:289px;width:27px">2</div>
<div class="c r" style="left:58px;top:289px;width:97px">64.0</div>
<div class="c r" style="left:155px;top:289px;width:72px">8.0</div>
<div class="c r" style="left:227px;top:289px;width:72px">18.3</div>
<div class="c r" style="left:299px;top:289px;width:72px">-0.1</div>
<div class="c r" style="left:30px;top:314px;width:27px">3</div>
<div class="c r" style="left:58px;top:314px;width:97px">101.0</div>
<div class="c r" style="left:155px;top:314px;width:72px">11.4</div>
<div class="c r" style="left:227px;top:314px;width:72px">22.0</div>
<div class="c r" style="left:299px;top:314px;width:72px">2.1</div>
<div class="c r" style="left:30px;top:339px;width:27px">4</div>
<div class="c r" style="left:58px;top:339px;width:97px">116.5</div>
<div class="c r" style="left:155px;top:339px;width:72px">13.7</div>
<div class="c r" style="left:227px;top:339px;width:72px">24.1</div>
<div class="c r" style="left:299px;top:339px;width:72px">6.2</div>
<div class="c r" style="left:30px;top:364px;width:27px">5</div>
<div class="c r" style="left:58px;top:364px;width:97px">97.0</div>
<div class="c r" style="left:155px;top:364px;width:72px">20.8</div>
<div class="c r" style="left:227px;top:364px;width:72px">29.7</div>
<div class="c r" style="left:299px;top:364px;width:72px">12.5</div>
<div class="c r" style="left:30px;top:389px;width:27px">6</div>
<div class="c r" style="left:58px;top:389px;width:97px">186.0</div>
<div class="c r" style="left:155px;top:389px;width:72px">24.9</div>
<div class="c r" style="left:227px;top:389px;width:72px">32.9</div>
<div class="c r" style="left:299px;top:389px;width:72px">17.8</div>
<div class="c r" style="left:30px;top:414px;width:27px">7</div>
<div class="c r" style="left:58px;top:414px;width:97px">413.0</div>
<div class="c r" style="left:155px;top:414px;width:72px">26.0</div>
<div class="c r" style="left:227px;top:414px;width:72px">34.4</div>
<div class="c r" style="left:299px;top:414px;width:72px">19.5</div>
<div class="c r" style="left:30px;top:439px;width:27px">8</div>
<div class="c r" style="left:58px;top:439px;width:97px">114.5</div>
<div class="c r" style="left:155px;top:439px;width:72px">30.7</div>
<div class="c r" style="left:227px;top:439px;width:72px">38.6</div>
<div class="c r" style="left:299px;top:439px;width:72px">24.4</div>
<div class="c r" style="left:30px;top:464px;width:27px">9</div>
<div class="c r" style="left:58px;top:464px;width:97px">98.0</div>
<div class="c r" style="left:155px;top:464px;width:72px">25.8</div>
<div class="c r" style="left:227px;top:464px;width:72px">35.9</div>
<div class="c r" style="left:299px;top:464px;width:72px">17.9</div>
<div class="c r" style="left:30px;top:489px;width:27px">10</div>
<div class="c r" style="left:58px;top:489px;width:97px">205.0</div>
<div class="c r" style="left:155px;top:489px;width:72px">18.7</div>
<div class="c r" style="left:227px;top:489px;width:72px">27.8</div>
<div class="c r" style="left:299px;top:489px;width:72px">9.4</div>
<div class="c r" style="left:30px;top:514px;width:27px">11</div>
<div class="c r" style="left:58px;top:514px;width:97px">47.0</div>
<div class="c r" style="left:155px;top:514px;width:72px">14.7</div>
<div class="c r" style="left:227px;top:514px;width:72px">26.6</div>
<div class="c r" style="left:299px;top:514px;width:72px">7.0</div>
<div class="c r" style="left:30px;top:539px;width:27px">12</div>
<div class="c r" style="left:58px;top:539px;width:97px">18.5</div>
<div class="c r" style="left:155px;top:539px;width:72px">8.7</div>
<div class="c r" style="left:227px;top:539px;width:72px">17.0</div>
<div class="c r" style="left:299px;top:539px;width:72px">1.3</div>
<svg style="left:30px;top:239px;overflow:hidden" width="341" height="325" viewBox="0 0 341 325" fill="none" stroke="#217346" stroke-width="2" stroke-dasharray="7 2"><path d="M0 0h341"/><path d="M0 0v325"/><path d="M340 0v325"/><path d="M0 324h341"/></svg>

<div class="a" style="left:441px;top:237px;width:75px;height:28px;border:2px solid #217346"></div>
<div class="a" style="left:512px;top:261px;width:5px;height:5px;background:#217346;border:1px solid #fff;box-sizing:content-box;margin:-1px"></div>
</div>
<!-- grid right/bottom borders -->
<div class="a" style="left:1052px;top:238px;width:1px;height:470px;background:#9b9b9b"></div>
<div class="a" style="left:1px;top:707px;width:1052px;height:1px;background:#9b9b9b"></div>
<!-- vertical scrollbar -->
<div class="a" style="left:1056px;top:231px;width:15px;height:462px;background:#dadada"></div>
<div class="a" style="left:1056px;top:216px;width:15px;height:15px;background:#fff;border:1px solid #ababab"></div>
<svg style="left:1060px;top:221px" width="7" height="4" viewBox="0 0 7 4"><path d="M0 4l3.500-4 3.500 4z" fill="#777"/></svg>
<div class="a" style="left:1056px;top:231px;width:15px;height:415px;background:#fff;border:1px solid #ababab"></div>
<div class="a" style="left:1056px;top:693px;width:15px;height:15px;background:#fff;border:1px solid #ababab"></div>
<svg style="left:1060px;top:699px" width="7" height="4" viewBox="0 0 7 4"><path d="M0 0l3.500 4 3.500-4z" fill="#777"/></svg>
<!-- horizontal scrollbar -->
<div class="a" style="left:662px;top:714px;width:391px;height:15px;background:#dadada"></div>
<div class="a" style="left:662px;top:714px;width:15px;height:15px;background:#fff;border:1px solid #ababab"></div>
<svg style="left:667px;top:718px" width="4" height="7" viewBox="0 0 4 7"><path d="M4 0l-4 3.500 4 3.500z" fill="#444"/></svg>
<div class="a" style="left:677px;top:714px;width:335px;height:15px;background:#fff;border:1px solid #ababab"></div>
<div class="a" style="left:1038px;top:714px;width:15px;height:15px;background:#fff;border:1px solid #ababab"></div>
<svg style="left:1044px;top:718px" width="4" height="7" viewBox="0 0 4 7"><path d="M0 0l4 3.500-4 3.500z" fill="#444"/></svg>
<div class="a" style="left:645px;top:716px;width:2px;height:2px;background:#a0a0a0"></div>
<div class="a" style="left:645px;top:720px;width:2px;height:2px;background:#a0a0a0"></div>
<div class="a" style="left:645px;top:724px;width:2px;height:2px;background:#a0a0a0"></div>

<!-- sheet tabs -->
<svg style="left:27px;top:717px" width="5" height="8" viewBox="0 0 5 8"><path d="M5 0l-5 4 5 4z" fill="#c0c0c0"/></svg>
<svg style="left:57px;top:717px" width="5" height="8" viewBox="0 0 5 8"><path d="M0 0l5 4-5 4z" fill="#c0c0c0"/></svg>
<div class="a" style="left:101px;top:707px;width:73px;height:24px;background:#fff;border-left:1px solid #ababab;border-right:1px solid #ababab;border-bottom:2px solid #217346"></div>
<div class="t" style="left:115.500px;top:714px;font-size:13.500px;color:#217346;letter-spacing:0.1px">Sheet1</div>
<svg style="left:207px;top:713px" width="16" height="16" viewBox="0 0 16 16" fill="none" stroke="#5a5a5a" stroke-width="1.100"><circle cx="8" cy="8" r="7"/><path d="M8 4v8M4 8h8" stroke-width="1.400"/></svg>
<!-- status bar -->
<div class="a" style="left:1px;top:735px;width:1073px;height:22px;background:#f3f2f1;border-top:1px solid #d0d0d0"></div>
<div class="t" style="left:7.500px;top:740.500px;font-size:12px;letter-spacing:-1.39px;color:#3b3a39">コピー先を選択し、</div>
<div class="t" style="left:98px;top:740.500px;font-size:12px;letter-spacing:-0.05px;color:#3b3a39">Enter</div>
<div class="t" style="left:132.500px;top:740.500px;font-size:12px;letter-spacing:-1.15px;color:#3b3a39">キーを押すか、</div>
<div class="t" style="left:201px;top:740.500px;font-size:12px;letter-spacing:-0.66px;color:#3b3a39">貼り付けを選択します。</div>
<div class="a" style="left:757px;top:736px;width:40px;height:21px;background:#c8c6c4"></div>
<svg style="left:770px;top:739px" width="13" height="13" viewBox="0 0 13 13" fill="none" stroke="#3b3a39" stroke-width="1.100"><path d="M0.500 0.500h12v12h-12zM0.500 4.500h12M0.500 8.500h12M4.500 0.500v12M8.500 0.500v12"/></svg>
<svg style="left:810px;top:739px" width="14" height="13" viewBox="0 0 14 13" fill="none" stroke="#3b3a39" stroke-width="1.100"><path d="M0.500 0.500h13v12h-13z"/><path d="M3.500 3.500h7v6h-7z"/><path d="M5 5.500h4M5 7.500h4" stroke-width="0.900"/></svg>
<svg style="left:850px;top:739px" width="14" height="13" viewBox="0 0 14 13" fill="none" stroke="#3b3a39" stroke-width="1.100"><path d="M0.500 0.500h13v12h-13z"/><path d="M0.500 6.500h8.500v-6M4.500 0.500v6"/></svg>
<div class="a" style="left:883px;top:745px;width:8px;height:1px;background:#3b3a39"></div>
<div class="a" style="left:896px;top:745px;width:100px;height:1px;background:#a6a6a6"></div>
<div class="a" style="left:944px;top:740px;width:5px;height:12px;background:#777"></div>
<div class="a" style="left:1001px;top:745px;width:9px;height:1px;background:#3b3a39"></div>
<div class="a" style="left:1005px;top:741px;width:1px;height:9px;background:#3b3a39"></div>
<div class="t" style="left:1023px;top:740px;font-size:12px;letter-spacing:0.10px;color:#444">100%</div>

<div class="a" style="left:9px;top:163px;width:198px;height:84px;background:#fff;border:1px solid #bebebe"></div>
<div class="t" style="left:20.500px;top:172px;font-size:12px;letter-spacing:0.66px;color:#3b3a39;font-weight:bold">貼り付け (Ctrl+V)</div>
<div class="t" style="left:20.500px;top:193px;font-size:12px;letter-spacing:-0.94px;color:#5e5e5e">書式を貼り付けたり、内容だけ貼り</div>
<div class="t" style="left:20.500px;top:208px;font-size:12px;letter-spacing:-1.47px;color:#5e5e5e">付けたりするなど、貼り付けオプション</div>
<div class="t" style="left:20.500px;top:223px;font-size:12px;letter-spacing:-0.98px;color:#5e5e5e">を選びます。</div>

</body></html>
